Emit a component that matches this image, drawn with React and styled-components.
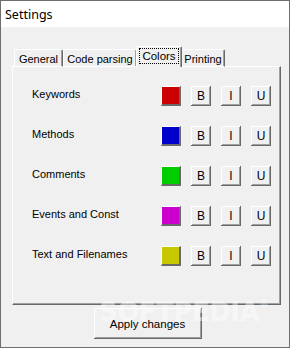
import React from 'react';
import styled, { createGlobalStyle } from 'styled-components';

const GlobalStyle = createGlobalStyle`
  html, body {
    margin: 0;
    padding: 0;
    background: #f0f0f0;
  }
`;

const rows = [
  { label: 'Keywords', color: '#cc0000' },
  { label: 'Methods', color: '#0000cc' },
  { label: 'Comments', color: '#00cc00' },
  { label: 'Events and Const', color: '#cc00cc' },
  { label: 'Text and Filenames', color: '#c8c800' },
];

const tabs = [
  { name: 'General', width: 49 },
  { name: 'Code parsing', width: 74 },
  { name: 'Colors', width: 46, active: true },
  { name: 'Printing', width: 44 },
];

const App = () => {
  return (
    <Window>
      <GlobalStyle />
      <TitleBar>Settings</TitleBar>
      <Body>
        <TabStrip>
          {tabs.map((t) => (
            <Tab key={t.name} $active={t.active} style={{ width: t.width }}>
              {t.active ? <FocusLabel>{t.name}</FocusLabel> : t.name}
            </Tab>
          ))}
        </TabStrip>
        <Panel>
          {rows.map((r) => (
            <Row key={r.label}>
              <Label>{r.label}</Label>
              <Swatch $color={r.color} />
              <StyleButton>B</StyleButton>
              <StyleButton>I</StyleButton>
              <StyleButton>U</StyleButton>
            </Row>
          ))}
        </Panel>
        <Footer>
          <ApplyButton>Apply changes</ApplyButton>
        </Footer>
        <Watermark>SOFTPEDIA<sup>®</sup></Watermark>
      </Body>
    </Window>
  );
};

export default App;

const raised = `
  box-shadow: inset -1px -1px 0 #696969, inset 1px 1px 0 #ffffff, inset -2px -2px 0 #a0a0a0;
`;

const Window = styled.div`
  width: 290px;
  height: 348px;
  box-sizing: border-box;
  border: 1px solid #6e6e6e;
  display: flex;
  flex-direction: column;
  font-family: "Liberation Sans", Arial, sans-serif;
  font-size: 11px;
  color: #000;
  position: relative;
  overflow: hidden;
`;

const TitleBar = styled.div`
  height: 26px;
  background: #ffffff;
  display: flex;
  align-items: center;
  padding-left: 4px;
  font-family: "Noto Sans", "Open Sans", sans-serif;
  font-size: 12.5px;
  color: #000;
`;

const Body = styled.div`
  flex: 1;
  background: #f0f0f0;
  padding: 19px 8px 0 11px;
  display: flex;
  flex-direction: column;
`;

const TabStrip = styled.div`
  display: flex;
  align-items: flex-end;
  height: 21px;
  padding-left: 2px;
  position: relative;
  z-index: 1;
  margin-bottom: -1px;
`;

const Tab = styled.div`
  box-sizing: border-box;
  height: ${(p) => (p.$active ? '21px' : '18px')};
  margin: ${(p) => (p.$active ? '0 -1px' : '0')};
  padding-top: ${(p) => (p.$active ? '2px' : '3px')};
  background: #f0f0f0;
  border-top: 1px solid #ffffff;
  border-left: 1px solid #ffffff;
  border-right: 1px solid #696969;
  box-shadow: inset -1px 0 0 #a0a0a0;
  border-radius: 2px 2px 0 0;
  display: flex;
  justify-content: center;
  align-items: flex-start;
  white-space: nowrap;
  position: relative;
  z-index: ${(p) => (p.$active ? 2 : 1)};
  border-bottom: ${(p) => (p.$active ? 'none' : '1px solid #ffffff')};
`;

const FocusLabel = styled.span`
  outline: 1px dotted #000;
  outline-offset: 0;
  padding: 0 2px;
  line-height: 14px;
  font-size: 11.5px;
`;

const Panel = styled.div`
  height: 239px;
  box-sizing: border-box;
  border-top: 1px solid #ffffff;
  border-left: 1px solid #ffffff;
  border-right: 1px solid #696969;
  border-bottom: 1px solid #696969;
  box-shadow: inset -1px -1px 0 #a0a0a0;
  padding: 19px 9px 0 19px;
  display: flex;
  flex-direction: column;
  gap: 20px;
`;

const Row = styled.div`
  display: grid;
  grid-template-columns: 1fr 20px 20px 20px 20px;
  column-gap: 10px;
  align-items: center;
  height: 20px;
`;

const Label = styled.span`
  color: #000;
  margin-top: -4px;
`;

const Swatch = styled.div`
  width: 20px;
  height: 20px;
  box-sizing: border-box;
  background: ${(p) => p.$color};
  border-top: 1px solid #ffffff;
  border-left: 1px solid #ffffff;
  border-right: 2px solid #696969;
  border-bottom: 2px solid #696969;
`;

const StyleButton = styled.div`
  width: 20px;
  height: 20px;
  box-sizing: border-box;
  background: #f0f0f0;
  ${raised}
  display: flex;
  align-items: center;
  justify-content: center;
  font-size: 12px;
  color: #000;
`;

const Footer = styled.div`
  display: flex;
  justify-content: center;
  padding-top: 3px;
  padding-left: 2px;
`;

const ApplyButton = styled.div`
  width: 108px;
  height: 31px;
  box-sizing: border-box;
  background: #f0f0f0;
  ${raised}
  display: flex;
  align-items: center;
  justify-content: center;
  font-size: 11.5px;
`;

const Watermark = styled.div`
  position: absolute;
  left: 98px;
  top: 290px;
  font-family: "DejaVu Sans", sans-serif;
  font-weight: bold;
  font-size: 26px;
  line-height: 26px;
  letter-spacing: -0.5px;
  color: rgba(255, 255, 255, 0.45);
  pointer-events: none;
  white-space: nowrap;

  sup {
    font-size: 10px;
    vertical-align: 14px;
  }
`;
